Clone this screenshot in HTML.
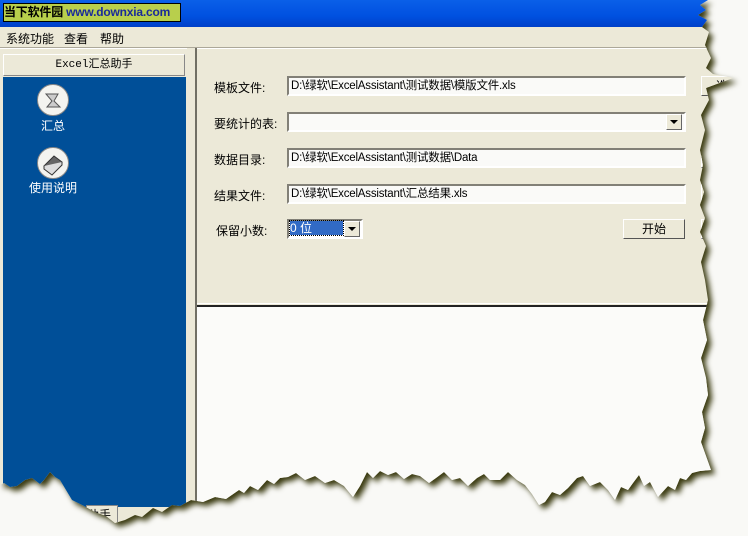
<!DOCTYPE html>
<html><head><meta charset="utf-8"><style>
body{margin:0;width:748px;height:536px;background:#f9f9f6;overflow:hidden;position:relative;font-family:"Liberation Sans","WenQuanYi Zen Hei","Noto Sans CJK SC",sans-serif;font-size:12px;color:#000}
.wrap{position:absolute;left:0;top:0;width:748px;height:536px;filter:drop-shadow(4px 4px 3px #3a3a10)}
.win{position:absolute;left:0;top:0;width:748px;height:536px;background:#ece9d8;
clip-path:polygon(0 0,708px 0,700px 5px,706px 10px,698px 15px,707px 20px,702px 27px,709px 32px,705px 45px,711px 58px,706px 68px,713px 74px,733px 78px,706px 88px,709px 100px,701px 115px,705px 130px,700px 150px,703px 165px,700px 180px,704px 192px,700px 205px,705px 218px,700px 232px,706px 246px,701px 262px,705px 280px,708px 300px,703px 320px,707px 340px,701px 358px,706px 378px,708px 395px,702px 412px,705px 428px,701px 442px,706px 456px,711px 470px,700px 471px,692px 473px,686px 480px,680px 478px,675px 490px,668px 486px,658px 497px,650px 482px,644px 486px,639px 475px,633px 483px,628px 490px,621px 487px,615px 500px,608px 490px,600px 482px,590px 486px,583px 476px,577px 478px,568px 488px,560px 495px,552px 492px,545px 502px,539px 505px,532px 494px,525px 485px,517px 480px,508px 472px,500px 480px,490px 480px,484px 474px,477px 478px,468px 486px,460px 478px,452px 480px,444px 472px,436px 478px,429px 483px,420px 476px,412px 474px,404px 479px,396px 472px,388px 475px,380px 471px,373px 478px,367px 472px,360px 486px,353px 497px,344px 486px,334px 480px,325px 483px,315px 476px,305px 480px,296px 473px,288px 477px,280px 478px,274px 484px,267px 480px,258px 490px,250px 486px,244px 493px,239px 490px,226px 499px,215px 497px,203px 502px,191px 500px,180px 506px,172px 505px,162px 512px,153px 508px,142px 517px,135px 515px,125px 520px,115px 523px,106px 516px,95px 512px,84px 506px,72px 500px,66px 490px,60px 480px,55px 477px,50px 472px,44px 480px,40px 484px,32px 478px,25px 480px,17px 486px,10px 487px,4px 483px,0 485px)}
.title{position:absolute;left:0;top:0;width:748px;height:27px;background:linear-gradient(#0a5fe8,#0050e0 60%,#0040c8)}
.logo{position:absolute;left:3px;top:3px;width:176px;height:17px;background:#b8cf4c;border:1px solid #000;font-weight:bold;font-size:12px;line-height:17px;white-space:nowrap;overflow:hidden;letter-spacing:-0.2px}
.menu{position:absolute;top:30px;font-size:12px}
.sep{position:absolute;left:0;top:47px;width:748px;height:1px;background:#fff;border-top:1px solid #aca899}
.hdr{position:absolute;left:3px;top:54px;width:180px;height:20px;border:1px solid;border-color:#fff #888 #888 #fff;background:#ece9d8;text-align:center;line-height:20px;font-family:"Liberation Mono","WenQuanYi Zen Hei",monospace;font-size:11px}
.blue{position:absolute;left:3px;top:77px;width:183px;height:430px;background:#004f98}
.ic{position:absolute;left:37px;width:30px;height:30px;border-radius:50%;background:#f4f4f0;border:1px solid #888}
.lb{position:absolute;color:#fff;text-align:center;width:100px;left:3px}
.inp{position:absolute;left:287px;width:393px;height:16px;background:#fafaf8;border:2px solid;border-color:#828077 #fff #fff #828077;line-height:16px;padding-left:2px;white-space:nowrap;font-size:11.5px;letter-spacing:-0.2px}
.lab{position:absolute;left:214px}
.dd{position:absolute;width:14px;height:14px;background:#ece9d8;border:1px solid;border-color:#fff #666 #666 #fff}
.dd:after{content:"";position:absolute;left:3px;top:5px;border:4px solid transparent;border-top:4px solid #000;border-bottom:0}
.btn{position:absolute;height:18px;background:#ece9d8;border:1px solid;border-color:#fff #555 #555 #fff;text-align:center;line-height:18px}
</style></head><body>
<div class="wrap"><div class="win">
<div class="title"><div class="logo"><span style="color:#000">当下软件园</span> <span style="color:#1a2a9a">www.downxia.com</span></div></div>
<div class="menu" style="left:6px">系统功能</div><div class="menu" style="left:64px">查看</div><div class="menu" style="left:100px">帮助</div>
<div class="sep"></div>
<div class="hdr">Excel汇总助手</div>
<div class="blue"></div>
<div class="ic" style="top:84px"><svg width="30" height="30"><path d="M8 9h12l-4 7 6 6H9l5-6z" fill="#ccc" stroke="#555"/></svg></div>
<div class="lb" style="top:117px">汇总</div>
<div class="ic" style="top:147px"><svg width="30" height="30"><path d="M6 18l10-10 8 6-10 10z" fill="#666" stroke="#333"/><path d="M6 18v3l8 6 10-10v-3" fill="#ddd" stroke="#333"/></svg></div>
<div class="lb" style="top:179px">使用说明</div>
<div style="position:absolute;left:86px;top:505px;width:30px;height:18px;background:#ece9d8;border:1px solid #888">助手</div>
<div style="position:absolute;left:187px;top:48px;width:8px;height:488px;background:#ece9d8"></div>
<div style="position:absolute;left:195px;top:48px;width:2px;height:488px;background:#716f64"></div>
<div style="position:absolute;left:197px;top:303px;width:551px;height:1px;background:#fff"></div>
<div style="position:absolute;left:197px;top:305px;width:551px;height:2px;background:#222"></div>
<div style="position:absolute;left:197px;top:307px;width:551px;height:229px;background:#fbfbf9"></div>
<div class="lab" style="top:79px">模板文件:</div><div class="inp" style="top:76px">D:\绿软\ExcelAssistant\测试数据\模版文件.xls</div>
<div class="lab" style="top:115px">要统计的表:</div><div class="inp" style="top:112px"></div><div class="dd" style="left:666px;top:114px"></div>
<div class="lab" style="top:151px">数据目录:</div><div class="inp" style="top:148px">D:\绿软\ExcelAssistant\测试数据\Data</div>
<div class="lab" style="top:187px">结果文件:</div><div class="inp" style="top:184px">D:\绿软\ExcelAssistant\汇总结果.xls</div>
<div class="lab" style="top:222px;left:216px">保留小数:</div>
<div style="position:absolute;left:287px;top:219px;width:72px;height:16px;background:#fff;border:2px solid;border-color:#828077 #fff #fff #828077"></div>
<div style="position:absolute;left:290px;top:221px;width:53px;height:14px;background:#316ac5;color:#fff;line-height:14px;outline:1px dotted #000">0 位</div>
<div class="dd" style="left:344px;top:221px"></div>
<div class="btn" style="left:623px;top:219px;width:60px">开始</div>
<div class="btn" style="left:701px;top:76px;width:40px">选</div>
<div class="btn" style="left:701px;top:148px;width:40px"></div>
<div class="btn" style="left:701px;top:184px;width:40px"></div>
<div class="btn" style="left:701px;top:219px;width:40px"></div>
</div></div>
</body></html>
